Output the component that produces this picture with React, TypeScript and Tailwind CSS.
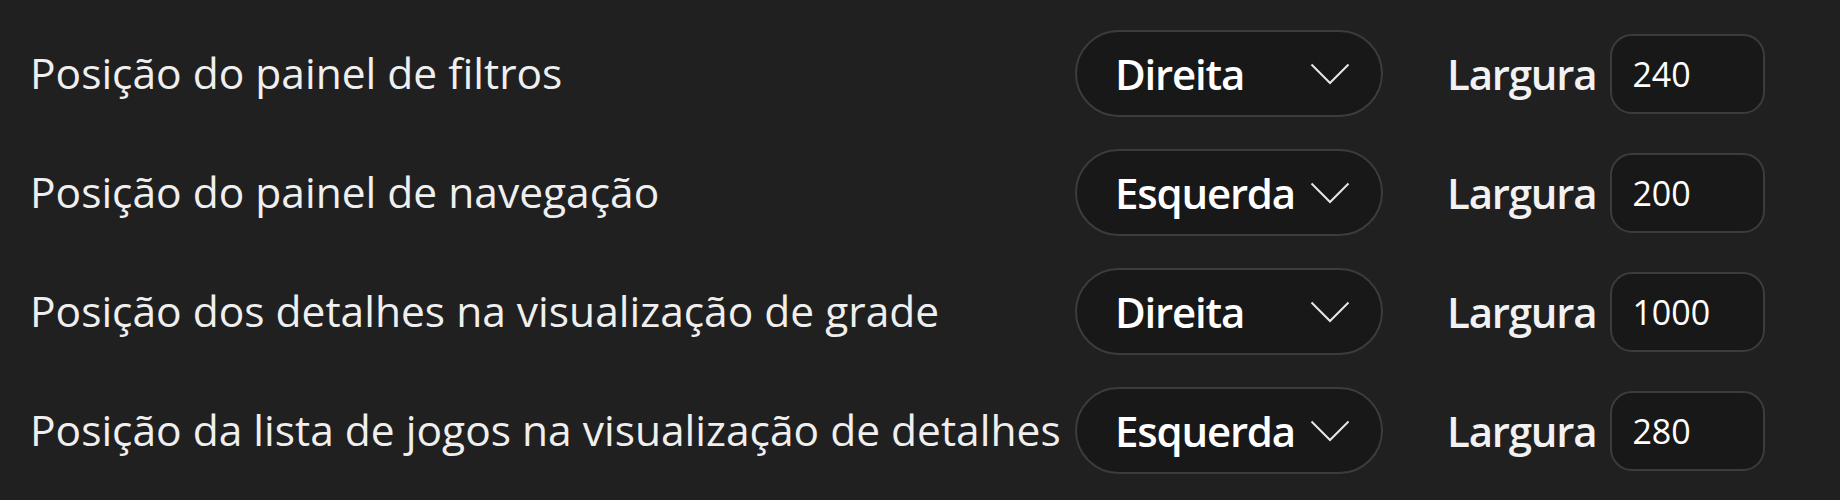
import { useState } from 'react';

type Side = 'Direita' | 'Esquerda';

interface PanelSetting {
  label: string;
  side: Side;
  width: number;
}

const settings: PanelSetting[] = [
  { label: 'Posição do painel de filtros', side: 'Direita', width: 240 },
  { label: 'Posição do painel de navegação', side: 'Esquerda', width: 200 },
  { label: 'Posição dos detalhes na visualização de grade', side: 'Direita', width: 1000 },
  { label: 'Posição da lista de jogos na visualização de detalhes', side: 'Esquerda', width: 280 },
];

const Chevron = () => (
  <svg width="40" height="22" viewBox="0 0 40 22" fill="none" className="shrink-0">
    <polyline points="1.5,1.5 20,20 38.5,1.5" stroke="#e6e6e6" strokeWidth="2" />
  </svg>
);

const SettingRow = ({ setting }: { setting: PanelSetting }) => {
  const [width, setWidth] = useState(String(setting.width));

  return (
    <div className="flex items-center h-[87px]">
      <div className="w-[1045px] shrink-0 text-[42.5px] leading-none text-[#efefef] whitespace-nowrap">
        {setting.label}
      </div>
      <button className="w-[308px] h-[87px] shrink-0 rounded-full border-2 border-[#3c3c3c] bg-[#181818] flex items-center justify-between pl-[38px] pr-[31px] text-[42px] font-semibold tracking-[-1.2px] leading-none text-white">
        <span>{setting.side}</span>
        <Chevron />
      </button>
      <span className="ml-[64px] text-[42px] font-semibold tracking-[-1.2px] leading-none text-[#f2f2f2]">
        Largura
      </span>
      <input
        value={width}
        onChange={(e) => setWidth(e.target.value)}
        className="ml-[14px] w-[155px] h-[80px] rounded-[22px] border-2 border-[#3c3c3c] bg-[#181818] pl-[20px] text-[34px] text-white outline-none"
      />
    </div>
  );
};

export default function App() {
  return (
    <div
      className="w-[1840px] h-[500px] bg-[#202020] pt-[30px] pl-[30px] flex flex-col gap-[32px]"
      style={{ fontFamily: '"Open Sans", "Noto Sans", sans-serif' }}
    >
      {settings.map((s) => (
        <SettingRow key={s.label} setting={s} />
      ))}
    </div>
  );
}
